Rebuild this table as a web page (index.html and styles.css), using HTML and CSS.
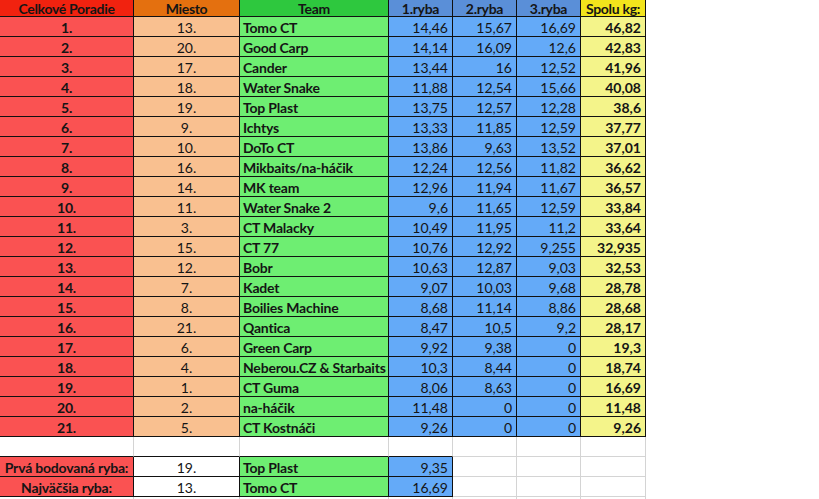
FILE: index.html
```html
<!DOCTYPE html>
<html lang="sk">
<head>
<meta charset="utf-8">
<title>Výsledky</title>
<link rel="stylesheet" href="styles.css">
</head>
<body>
<div class="sheet">
  <div class="c h h1">Celkové Poradie</div><div class="c h h2">Miesto</div><div class="c h h3">Team</div><div class="c h h4">1.ryba</div><div class="c h h4">2.ryba</div><div class="c h h4">3.ryba</div><div class="c h h7">Spolu kg:</div>

  <div class="c r1">1.</div><div class="c r2">13.</div><div class="c r3">Tomo CT</div><div class="c r4">14,46</div><div class="c r4">15,67</div><div class="c r4">16,69</div><div class="c r7">46,82</div>
  <div class="c r1">2.</div><div class="c r2">20.</div><div class="c r3">Good Carp</div><div class="c r4">14,14</div><div class="c r4">16,09</div><div class="c r4">12,6</div><div class="c r7">42,83</div>
  <div class="c r1">3.</div><div class="c r2">17.</div><div class="c r3">Cander</div><div class="c r4">13,44</div><div class="c r4">16</div><div class="c r4">12,52</div><div class="c r7">41,96</div>
  <div class="c r1">4.</div><div class="c r2">18.</div><div class="c r3">Water Snake</div><div class="c r4">11,88</div><div class="c r4">12,54</div><div class="c r4">15,66</div><div class="c r7">40,08</div>
  <div class="c r1">5.</div><div class="c r2">19.</div><div class="c r3">Top Plast</div><div class="c r4">13,75</div><div class="c r4">12,57</div><div class="c r4">12,28</div><div class="c r7">38,6</div>
  <div class="c r1">6.</div><div class="c r2">9.</div><div class="c r3">Ichtys</div><div class="c r4">13,33</div><div class="c r4">11,85</div><div class="c r4">12,59</div><div class="c r7">37,77</div>
  <div class="c r1">7.</div><div class="c r2">10.</div><div class="c r3">DoTo CT</div><div class="c r4">13,86</div><div class="c r4">9,63</div><div class="c r4">13,52</div><div class="c r7">37,01</div>
  <div class="c r1">8.</div><div class="c r2">16.</div><div class="c r3">Mikbaits/na-háčik</div><div class="c r4">12,24</div><div class="c r4">12,56</div><div class="c r4">11,82</div><div class="c r7">36,62</div>
  <div class="c r1">9.</div><div class="c r2">14.</div><div class="c r3">MK team</div><div class="c r4">12,96</div><div class="c r4">11,94</div><div class="c r4">11,67</div><div class="c r7">36,57</div>
  <div class="c r1">10.</div><div class="c r2">11.</div><div class="c r3">Water Snake 2</div><div class="c r4">9,6</div><div class="c r4">11,65</div><div class="c r4">12,59</div><div class="c r7">33,84</div>
  <div class="c r1">11.</div><div class="c r2">3.</div><div class="c r3">CT Malacky</div><div class="c r4">10,49</div><div class="c r4">11,95</div><div class="c r4">11,2</div><div class="c r7">33,64</div>
  <div class="c r1">12.</div><div class="c r2">15.</div><div class="c r3">CT 77</div><div class="c r4">10,76</div><div class="c r4">12,92</div><div class="c r4">9,255</div><div class="c r7">32,935</div>
  <div class="c r1">13.</div><div class="c r2">12.</div><div class="c r3">Bobr</div><div class="c r4">10,63</div><div class="c r4">12,87</div><div class="c r4">9,03</div><div class="c r7">32,53</div>
  <div class="c r1">14.</div><div class="c r2">7.</div><div class="c r3">Kadet</div><div class="c r4">9,07</div><div class="c r4">10,03</div><div class="c r4">9,68</div><div class="c r7">28,78</div>
  <div class="c r1">15.</div><div class="c r2">8.</div><div class="c r3">Boilies Machine</div><div class="c r4">8,68</div><div class="c r4">11,14</div><div class="c r4">8,86</div><div class="c r7">28,68</div>
  <div class="c r1">16.</div><div class="c r2">21.</div><div class="c r3">Qantica</div><div class="c r4">8,47</div><div class="c r4">10,5</div><div class="c r4">9,2</div><div class="c r7">28,17</div>
  <div class="c r1">17.</div><div class="c r2">6.</div><div class="c r3">Green Carp</div><div class="c r4">9,92</div><div class="c r4">9,38</div><div class="c r4">0</div><div class="c r7">19,3</div>
  <div class="c r1">18.</div><div class="c r2">4.</div><div class="c r3">Neberou.CZ &amp; Starbaits</div><div class="c r4">10,3</div><div class="c r4">8,44</div><div class="c r4">0</div><div class="c r7">18,74</div>
  <div class="c r1">19.</div><div class="c r2">1.</div><div class="c r3">CT Guma</div><div class="c r4">8,06</div><div class="c r4">8,63</div><div class="c r4">0</div><div class="c r7">16,69</div>
  <div class="c r1">20.</div><div class="c r2">2.</div><div class="c r3">na-háčik</div><div class="c r4">11,48</div><div class="c r4">0</div><div class="c r4">0</div><div class="c r7">11,48</div>
  <div class="c r1">21.</div><div class="c r2">5.</div><div class="c r3">CT Kostnáči</div><div class="c r4">9,26</div><div class="c r4">0</div><div class="c r4">0</div><div class="c r7">9,26</div>

  <div class="c e above"></div><div class="c e above"></div><div class="c e above"></div><div class="c e above"></div><div class="c e"></div><div class="c e"></div><div class="c e"></div>

  <div class="c r1 s">Prvá bodovaná ryba:</div><div class="c w">19.</div><div class="c r3 s">Top Plast</div><div class="c r4 s">9,35</div><div class="c e"></div><div class="c e"></div><div class="c e"></div>
  <div class="c r1 s">Najväčšia ryba:</div><div class="c w">13.</div><div class="c r3 s">Tomo CT</div><div class="c r4 s">16,69</div><div class="c e"></div><div class="c e"></div><div class="c e"></div>

  <div class="c e"></div><div class="c e"></div><div class="c e"></div><div class="c e"></div><div class="c e"></div><div class="c e"></div><div class="c e"></div>
</div>
</body>
</html>
```

FILE: styles.css
```css
html, body {
  margin: 0;
  padding: 0;
  background: #ffffff;
}

body {
  width: 819px;
  height: 499px;
  overflow: hidden;
  font-family: Lato, "Open Sans", "Liberation Sans", sans-serif;
  font-size: 14px;
  color: #151515;
}

.sheet {
  display: grid;
  grid-template-columns: 134px 106px 149px 64px 64px 64px 65px;
  grid-template-rows: 17px repeat(25, 20px);
  width: 646px;
}

.c {
  box-sizing: border-box;
  border-right: 1px solid #111;
  border-bottom: 1px solid #111;
  display: flex;
  align-items: center;
  white-space: nowrap;
  overflow: hidden;
  padding-top: 1px;
}

.h {
  justify-content: center;
  font-weight: 700;
  padding-top: 0;
  letter-spacing: -0.3px;
}

.h1 { background: #f1220f; }
.h2 { background: #e4700f; }
.h3 { background: #2ec83e; }
.h4 { background: #5a8fd8; }
.h7 { background: #f2e41c; }

.r1 {
  background: #fa5252;
  justify-content: center;
  font-weight: 700;
  letter-spacing: -0.2px;
}

.r2 {
  background: #f9c090;
  justify-content: center;
}

.r3 {
  background: #6eee72;
  font-weight: 700;
  padding-left: 3px;
  letter-spacing: -0.2px;
}

.r4 {
  background: #64aaf8;
  justify-content: flex-end;
  padding-right: 4px;
}

.r7 {
  background: #f4f48a;
  justify-content: flex-end;
  font-weight: 700;
  padding-right: 4px;
}

.e {
  border-right-color: #d4d4d4;
  border-bottom-color: #d4d4d4;
  background: #fff;
}

.e.above {
  border-bottom-color: #111;
}

.w {
  background: #fff;
  justify-content: center;
}
```
